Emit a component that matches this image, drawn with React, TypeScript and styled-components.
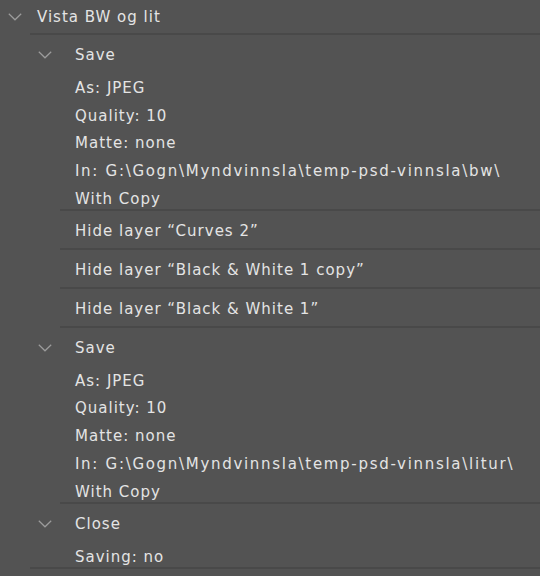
import React from "react";
import styled, { createGlobalStyle } from "styled-components";

const Global = createGlobalStyle`
  html, body {
    margin: 0;
    padding: 0;
    background: #535353;
  }
  body {
    font-family: "DejaVu Sans", "Liberation Sans", sans-serif;
    font-size: 15px;
    letter-spacing: 1px;
    color: #e4e4e4;
  }
`;

const Panel = styled.div`
  width: 540px;
  height: 576px;
  background: #535353;
  overflow: hidden;
  display: flex;
  flex-direction: column;
`;

const Divider = styled.div<{ $indent: number }>`
  height: 2px;
  margin-left: ${(p) => p.$indent}px;
  background: #494949;
  flex-shrink: 0;
`;

const SetRow = styled.div`
  display: flex;
  align-items: center;
  gap: 15px;
  padding: 7px 0 6px 8px;
  height: 20px;
`;

const Label = styled.span<{ $wide?: boolean }>`
  line-height: 20px;
  white-space: nowrap;
  letter-spacing: ${(p) => (p.$wide ? "1.7px" : "1px")};
`;

const Block = styled.div`
  display: flex;
  flex-direction: column;
  padding-top: 10px;
`;

const CommandHeader = styled.div`
  display: flex;
  align-items: center;
  gap: 23px;
  padding-left: 38px;
  height: 20px;
`;

const Details = styled.div`
  display: flex;
  flex-direction: column;
  gap: 7.7px;
  padding-left: 75px;
  margin-top: 13px;
`;

const PlainRow = styled.div`
  padding: 10px 0 7px 75px;
  height: 20px;
  display: flex;
  align-items: center;
`;

const ChevronBox = styled.svg`
  width: 14px;
  height: 8px;
  flex-shrink: 0;
  display: block;
`;

const Chevron = () => (
  <ChevronBox viewBox="0 0 14 8">
    <polyline
      points="0.8,0.8 7,6.8 13.2,0.8"
      fill="none"
      stroke="#9c9c9c"
      strokeWidth="1.2"
    />
  </ChevronBox>
);

type Cmd = { name: string; details: string[] };

const Command = ({ name, details }: Cmd) => (
  <Block>
    <CommandHeader>
      <Chevron />
      <Label>{name}</Label>
    </CommandHeader>
    <Details>
      {details.map((d) => (
        <Label key={d} $wide={d.includes("\\")}>
          {d}
        </Label>
      ))}
    </Details>
  </Block>
);

const saveBw = [
  "As: JPEG",
  "Quality: 10",
  "Matte: none",
  "In: G:\\Gogn\\Myndvinnsla\\temp-psd-vinnsla\\bw\\",
  "With Copy",
];

const saveLitur = [
  "As: JPEG",
  "Quality: 10",
  "Matte: none",
  "In: G:\\Gogn\\Myndvinnsla\\temp-psd-vinnsla\\litur\\",
  "With Copy",
];

const hides = [
  "Hide layer \u201cCurves 2\u201d",
  "Hide layer \u201cBlack & White 1 copy\u201d",
  "Hide layer \u201cBlack & White 1\u201d",
];

export default function App() {
  return (
    <>
      <Global />
      <Panel>
        <SetRow>
          <Chevron />
          <Label>Vista BW og lit</Label>
        </SetRow>
        <Divider $indent={30} />
        <Command name="Save" details={saveBw} />
        <Divider $indent={60} />
        {hides.map((h) => (
          <React.Fragment key={h}>
            <PlainRow>
              <Label>{h}</Label>
            </PlainRow>
            <Divider $indent={60} />
          </React.Fragment>
        ))}
        <Command name="Save" details={saveLitur} />
        <Divider $indent={60} />
        <Command name="Close" details={["Saving: no"]} />
        <Divider $indent={30} />
      </Panel>
    </>
  );
}
